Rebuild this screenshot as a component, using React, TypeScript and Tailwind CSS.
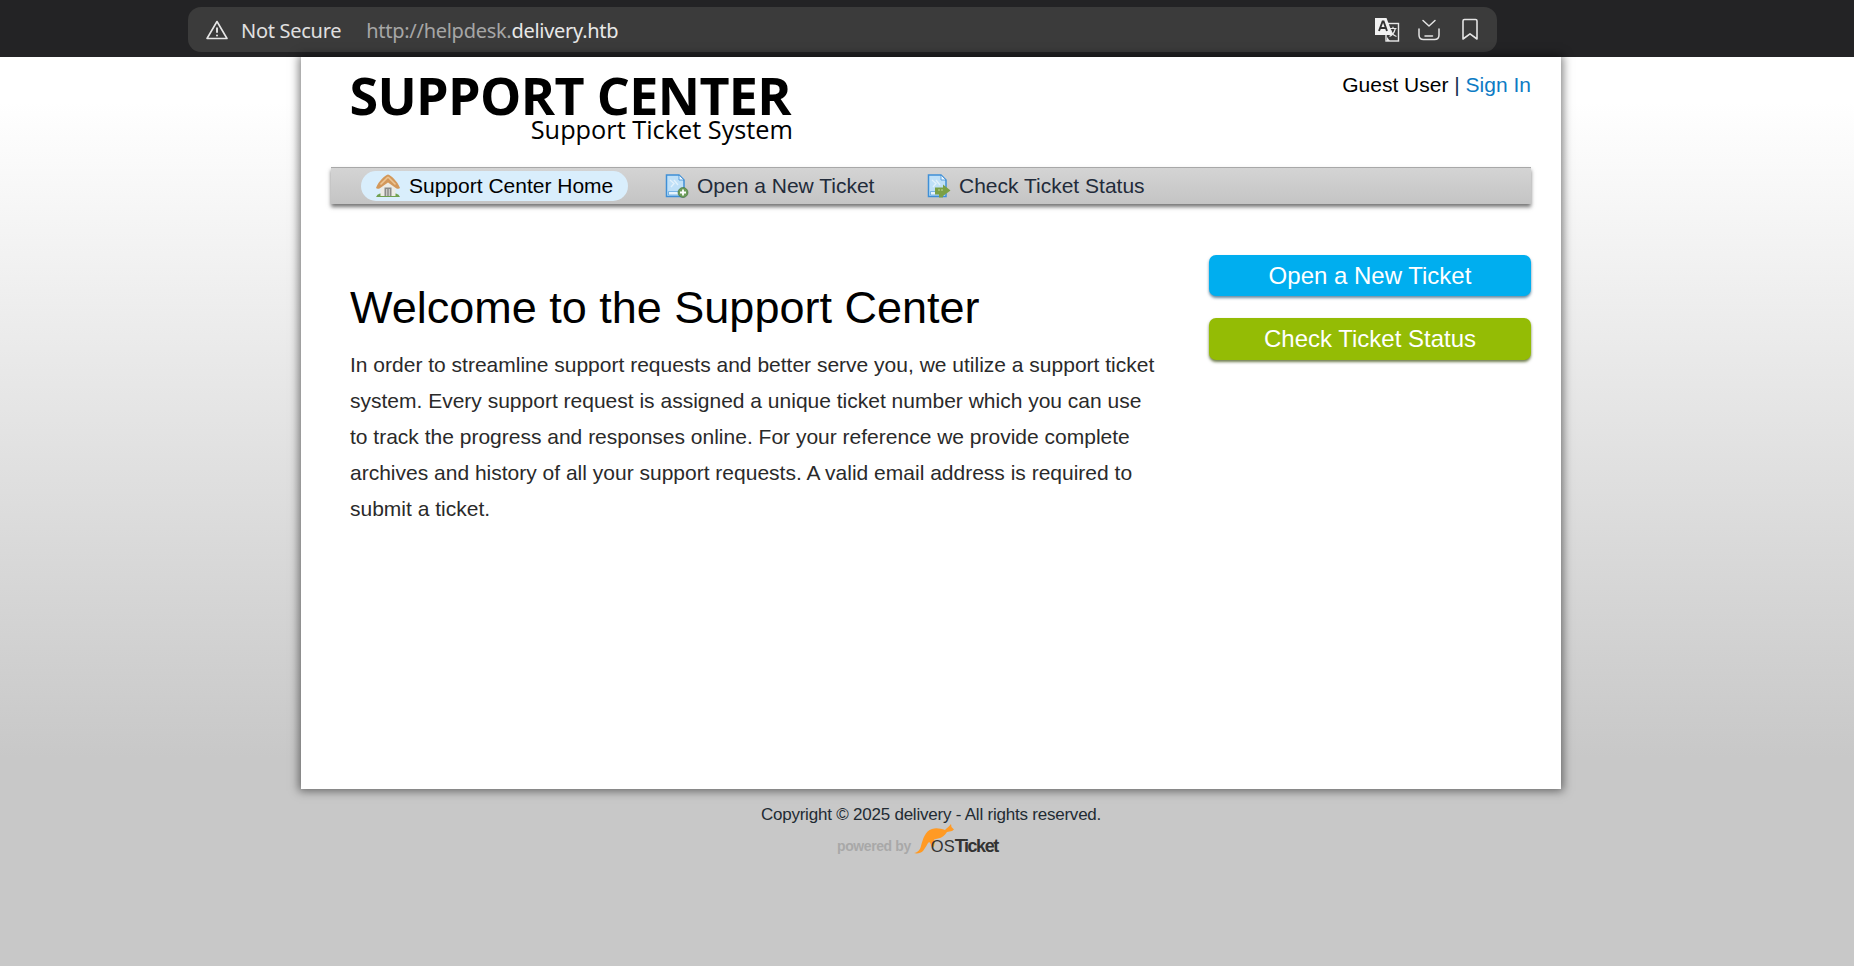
import React from "react";

const sans = "font-['Liberation_Sans',Arial,sans-serif]";

function Warn() {
  return (
    <svg width="22" height="20" viewBox="0 0 22 20" fill="none" stroke="#e6e6e6" strokeWidth="1.6" strokeLinejoin="round">
      <path d="M11 1.5 L21 18.5 H1 Z" />
      <path d="M11 7.5 V12.8" strokeWidth="1.9" />
      <circle cx="11" cy="15.4" r="1" fill="#e6e6e6" stroke="none" />
    </svg>
  );
}

function Translate() {
  return (
    <svg width="26" height="26" viewBox="0 0 26 26">
      <rect x="12" y="6.5" width="12.5" height="17.5" fill="#3b3b3b" stroke="#e8e8e8" strokeWidth="1.4" />
      <path d="M1 1 H12.5 L19 18 H1 Z" fill="#f2f2f2" />
      <path d="M13 20 L16 24 H21 L13 24 Z" fill="#e8e8e8" />
      <path d="M5 14 L8.6 4.5 H9.6 L13 14 M6.2 11 H12" fill="none" stroke="#333" strokeWidth="1.9" />
      <path d="M15.5 11.5 H22.5 M19 9.8 V11.5 M21.3 11.5 C20.5 15 18.5 18 15.5 19.5 M16.5 13 C17.5 16 19.5 18.5 22.5 19.5" fill="none" stroke="#e8e8e8" strokeWidth="1.2" />
    </svg>
  );
}

function Save() {
  return (
    <svg width="24" height="24" viewBox="0 0 24 24" fill="none" stroke="#e4e4e4" strokeWidth="1.5" strokeLinecap="round" strokeLinejoin="round">
      <path d="M6 2.5 L12 8 L18 2.5" />
      <path d="M2 11 V17 Q2 21.5 6.5 21.5 H17.5 Q22 21.5 22 17 V11" />
      <path d="M8 18 H15.5" />
    </svg>
  );
}

function Bookmark() {
  return (
    <svg width="18" height="23" viewBox="0 0 18 23" fill="none" stroke="#e4e4e4" strokeWidth="1.6" strokeLinejoin="round">
      <path d="M2 3 Q2 1.5 3.5 1.5 H14.5 Q16 1.5 16 3 V21 L9 15.8 L2 21 Z" />
    </svg>
  );
}

function HomeIcon() {
  return (
    <svg width="26" height="24" viewBox="0 0 26 24">
      <path d="M1 23 Q2 20 5 19.5 H21 Q24 20 25 23 Z" fill="#6fa14f" />
      <path d="M5.5 9 L13 4 L20.5 9 V22 H5.5 Z" fill="#ecebe4" />
      <path d="M9.5 13.5 H16.5 V22 H9.5 Z" fill="#8b8b88" />
      <path d="M11 15 H12.3 V22 H11 Z M13.7 15 H15 V22 H13.7 Z" fill="#c9c9c4" />
      <path d="M13 0.5 C10 1.5 3.5 7 1 14 Q2 15.2 4.5 14.5 L13 8.5 L21.5 14.5 Q24 15.2 25 14 C22.5 7 16 1.5 13 0.5 Z" fill="#d3985a" />
      <path d="M13 3 L5.5 10.5 M13 3 L20.5 10.5" stroke="#ecc594" strokeWidth="1.6" fill="none" />
    </svg>
  );
}

function DocBase() {
  return (
    <>
      <path d="M1.5 1 H14 L19 6 V22.5 H1.5 Z" fill="#bfe0f8" stroke="#3f8fd6" strokeWidth="1.5" />
      <path d="M14 1 V6 H19 Z" fill="#eef7fd" stroke="#3f8fd6" strokeWidth="0.8" />
      <path d="M3.5 17.5 H15 V21 H3.5 Z" fill="#e6f3fc" stroke="#5fa6e0" strokeWidth="0.8" />
      <path d="M5 6 L9 9.5 L6 13 M9 6 L13 11" stroke="#e3f1fb" strokeWidth="1.3" fill="none" />
    </>
  );
}

function NewIcon() {
  return (
    <svg width="24" height="24" viewBox="0 0 24 24">
      <DocBase />
      <circle cx="18" cy="18.5" r="5" fill="#6c9c58" stroke="#3e6b3a" strokeWidth="0.6" />
      <path d="M18 15.5 V21.5 M15 18.5 H21" stroke="#fff" strokeWidth="1.8" />
    </svg>
  );
}

function StatusIcon() {
  return (
    <svg width="24" height="24" viewBox="0 0 24 24">
      <DocBase />
      <path d="M8 13.5 H16 V10.5 L23.5 16.5 L16 22 V23.5 H12 V20.5 H8 Z" fill="#7ba045" />
      <circle cx="12" cy="16" r="0.8" fill="#c9dca6" />
      <circle cx="15" cy="16" r="0.8" fill="#c9dca6" />
    </svg>
  );
}

function Kangaroo() {
  return (
    <svg className="shrink-0 -mr-[23px]" width="40" height="30" viewBox="0 0 40 30" fill="#ff9a24">
      <path d="M0 29 C4 28.5 6 26 7 22 C9 15 11 7 18 5 C23 3.5 27 5 31 6 C33 4 35 2.5 37 0 L37.5 3 L40 5.5 L38 7 L33 8 C31 11 28 14 24 14.5 L20 15.5 C21 18 21 21 19 24 L17 22 C17 20 16 18.5 15 18 C13 20 11.5 24 9 27 C7 29 3 30 0 29 Z" />
    </svg>
  );
}

function NavItem({ icon, label, active, className }: { icon: React.ReactNode; label: string; active?: boolean; className: string }) {
  return (
    <a className={`flex items-center h-[30px] rounded-[15px] ${active ? "bg-[#d9eefc] text-black pl-[14px] pr-[15px]" : "text-[#222b3a]"} ${className}`}>
      <span className="w-[34px] shrink-0 flex">{icon}</span>
      <span className="text-[21px] whitespace-nowrap">{label}</span>
    </a>
  );
}

export default function App() {
  return (
    <div className={`${sans} h-[966px] overflow-hidden bg-[#c8c8c8] flex flex-col`}>
      <header className="h-[57px] shrink-0 bg-[#232325] flex pl-[188px] pt-[7px]">
        <div className="w-[1309px] h-[45px] rounded-[13px] bg-[#3b3b3b] flex items-center pl-[18px] pr-[18px] font-['Noto_Sans',sans-serif] text-[20px] tracking-[-0.28px]">
          <Warn />
          <span className="ml-[13px] pt-[2px] text-[#e0e0e0]">Not Secure</span>
          <span className="ml-[25px] pt-[2px] text-[#a6a6a6]">http://helpdesk.</span>
          <span className="pt-[2px] text-[#e8e8e8]">delivery.htb</span>
          <div className="ml-auto flex items-center">
            <Translate />
            <span className="ml-[17px] flex"><Save /></span>
            <span className="ml-[20px] flex"><Bookmark /></span>
          </div>
        </div>
      </header>

      <div className="flex-1 bg-gradient-to-b from-white from-[5%] to-[#c8c8c8] to-[77%]">
        <main className="ml-[301px] w-[1260px] h-[732px] bg-white shadow-[0_0_9px_2px_rgba(0,0,0,0.5)] px-[30px]">
          <div className="flex justify-between h-[110px]">
            <div className="ml-[19px] w-[441px] flex flex-col items-end font-['Open_Sans',sans-serif] text-black">
              <div className="text-[52px] font-bold leading-[48px] mt-[14px] tracking-[-0.65px] whitespace-nowrap">SUPPORT CENTER</div>
              <div className="text-[25.3px] leading-[20px] mr-[-2px] whitespace-nowrap">Support Ticket System</div>
            </div>
            <div className="text-[21px] text-black mt-[14px] leading-[28px]">
              Guest User <span className="text-[#17304f]">|</span> <a className="text-[#0d7bc4]">Sign In</a>
            </div>
          </div>

          <nav className="h-[37px] bg-gradient-to-b from-[#d4d4d4] to-[#c4c4c4] border-t-[1px] border-[#a8a8a8] shadow-[0_3px_4px_0_rgba(0,0,0,0.55)] flex items-center pl-[30px]">
            <NavItem icon={<HomeIcon />} label="Support Center Home" active className="w-[267px]" />
            <NavItem icon={<NewIcon />} label="Open a New Ticket" className="ml-[37px] w-[226px] [&>span:first-child]:w-[32px]" />
            <NavItem icon={<StatusIcon />} label="Check Ticket Status" className="ml-[36px] [&>span:first-child]:w-[32px]" />
          </nav>

          <div className="flex justify-between mt-[51px] pl-[19px]">
            <section className="w-[810px] mt-[23px]">
              <h1 className="text-[45px] leading-[60px] text-black font-normal">Welcome to the Support Center</h1>
              <p className="text-[21px] leading-[36px] text-[#2a2a2a] mt-[9px]">
                In order to streamline support requests and better serve you, we utilize a support ticket system. Every support request is assigned a unique ticket number which you can use to track the progress and responses online. For your reference we provide complete archives and history of all your support requests. A valid email address is required to submit a ticket.
              </p>
            </section>
            <aside className="w-[322px] flex flex-col gap-[22px] text-white text-[24px]">
              <a className="h-[41px] rounded-[7px] bg-[#00aeef] shadow-[0_2px_3px_rgba(0,60,100,0.6)] flex items-center justify-center">Open a New Ticket</a>
              <a className="h-[42px] rounded-[7px] bg-[#94bc05] shadow-[0_2px_3px_rgba(50,70,0,0.7)] flex items-center justify-center">Check Ticket Status</a>
            </aside>
          </div>
        </main>

        <footer className="ml-[301px] w-[1260px] flex flex-col items-center">
          <div className="text-[17px] leading-[22px] text-[#222b33] mt-[15px] tracking-[-0.22px]">Copyright © 2025 delivery - All rights reserved.</div>
          <div className="self-start flex items-end ml-[536px] -mt-[2px] h-[30px]">
            <span className="text-[14px] font-bold text-[#a8a8a8] leading-[20px] tracking-[-0.4px] whitespace-nowrap -mb-[2px]">powered by</span>
            <span className="ml-[3px] flex"><Kangaroo /></span>
            <span className="text-[#333] leading-[20px] whitespace-nowrap -mb-[3px]"><span className="text-[16.5px] font-normal">OS</span><span className="text-[18px] font-bold tracking-[-1.4px]">Ticket</span></span>
          </div>
        </footer>
      </div>
    </div>
  );
}
